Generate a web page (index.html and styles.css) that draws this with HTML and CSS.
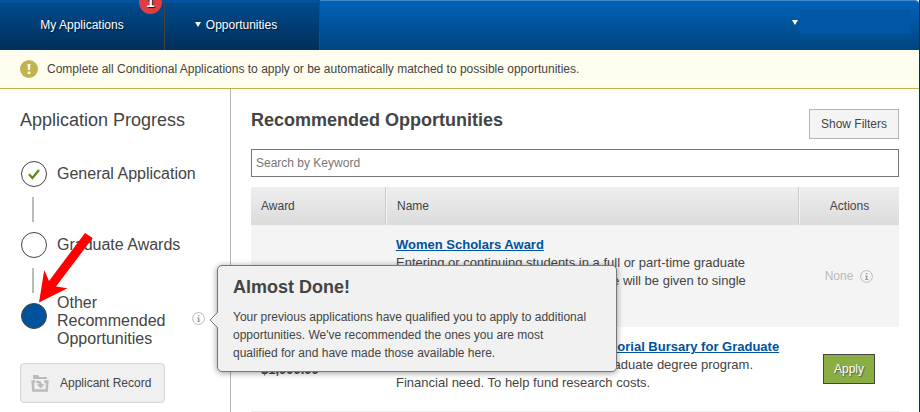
FILE: index.html
```html
<!DOCTYPE html>
<html lang="en">
    <head>
        <meta charset="UTF-8">
        <meta name="viewport" content="width=device-width, initial-scale=1.0">
        <title>Recommended Opportunities</title>
        <link rel="stylesheet" href="styles.css">
    </head>
    <body>
        <header class="topbar">
            <nav class="tabs">
                <a href="#" class="tab tab-applications">My Applications<span class="badge">1</span></a>
                <a href="#" class="tab tab-opportunities"><span class="caret"></span>Opportunities</a>
            </nav>
            <button class="user-menu" aria-label="Account">
                <span class="caret"></span>
                <span class="user-name"></span>
            </button>
        </header>
        <div class="notice">
            <svg width="18" height="18" viewBox="0 0 18 18">
                <circle cx="9" cy="9" r="9" fill="#c2b350"/>
                <path d="M7.5 4h3l-.5 6h-2z" fill="#fffdee"/>
                <circle cx="9" cy="12.7" r="1.5" fill="#fffdee"/>
            </svg>
            <p>Complete all Conditional Applications to apply or be automatically matched to possible opportunities.</p>
        </div>
        <div class="layout">
            <aside class="sidebar">
                <h2>Application Progress</h2>
                <div class="steps">
                    <div class="step">
                        <span class="dot">
                            <svg width="12" height="11" viewBox="0 0 12 11">
                                <path d="M1 5.2 4.4 9 11 1" fill="none" stroke="#5a8a1c" stroke-width="2.2"/>
                            </svg>
                        </span>
                        <a href="#" class="step-label">General Application</a>
                    </div>
                    <div class="connector"></div>
                    <div class="step">
                        <span class="dot"></span>
                        <a href="#" class="step-label">Graduate Awards</a>
                    </div>
                    <div class="connector"></div>
                    <div class="step step-current">
                        <span class="dot dot-current"></span>
                        <a href="#" class="step-label">Other Recommended Opportunities</a>
                        <span class="info">
                            <svg width="13" height="13" viewBox="0 0 13 13">
                                <circle cx="6.5" cy="6.5" r="5.9" fill="none" stroke="#bbb"/>
                                <path d="M6 3h1.4v1.3H6zM5 5.5h2.4v3.7h.9v.8H5v-.8h.9V6.3H5z" fill="#999"/>
                            </svg>
                            <div class="tooltip">
                                <svg class="tooltip-arrow" width="9" height="16" viewBox="0 0 9 16">
                                    <path d="M9 0 1 8l8 8" fill="#f1f1f1" stroke="#777"/>
                                </svg>
                                <h3>Almost Done!</h3>
                                <p>Your previous applications have qualified you to apply to additional opportunities. We've recommended the ones you are most qualified for and have made those available here.</p>
                            </div>
                        </span>
                    </div>
                    <svg class="pointer" width="55" height="70" viewBox="0 0 55 70">
                        <path d="M1 69.500 6.300 37l4.700 11L47 0l7.700 5L18 53.500l11.500 1.800z" fill="#f00"/>
                    </svg>
                </div>
                <button class="record">
                    <svg width="18" height="18" viewBox="0 0 18 18">
                        <path d="M2 1h5l1.500 2H16v2H2z" fill="#bbb"/>
                        <path d="M4.500 7.500H1.700L2.300 16.500h13.400l.6-9H13" fill="none" stroke="#bbb" stroke-width="2.500"/>
                        <path d="M5.500 8h1.500c1.800 0 2.700 1 2.700 3" fill="none" stroke="#bbb" stroke-width="2.500"/>
                        <path d="M5.700 10.200h8L9.700 14.600z" fill="#bbb"/>
                    </svg>
                    Applicant Record
                </button>
            </aside>
            <main class="content">
                <div class="content-head">
                    <h1>Recommended Opportunities</h1>
                    <button class="filters">Show Filters</button>
                </div>
                <input class="search" type="text" placeholder="Search by Keyword" aria-label="Search by Keyword">
                <table class="opportunities">
                    <thead>
                        <tr>
                            <th class="col-award">Award</th>
                            <th>Name</th>
                            <th class="col-actions">Actions</th>
                        </tr>
                    </thead>
                    <tbody>
                        <tr>
                            <td class="award"></td>
                            <td>
                                <a href="#">Women Scholars Award</a>
                                <p>Entering or continuing students in a full or part-time graduate<br>degree program each year. Preference will be given to single<br>parents.</p>
                            </td>
                            <td class="actions">
                                <span class="none">None
                                    <svg width="13" height="13" viewBox="0 0 13 13">
                                        <circle cx="6.5" cy="6.5" r="5.9" fill="none" stroke="#bbb"/>
                                        <path d="M6 3h1.4v1.3H6zM5 5.5h2.4v3.7h.9v.8H5v-.8h.9V6.3H5z" fill="#999"/>
                                    </svg>
                                </span>
                            </td>
                        </tr>
                        <tr>
                            <td class="award">$1,000.00</td>
                            <td>
                                <a href="#">University Alumni Scholarship Memorial Bursary for Graduate</a>
                                <p>Students who are fully enrolled in a graduate degree program.<br>Financial need. To help fund research costs.</p>
                            </td>
                            <td class="actions"><button class="apply">Apply</button></td>
                        </tr>
                    </tbody>
                </table>
            </main>
        </div>
    </body>
</html>
```
FILE: styles.css
```css
* {
    box-sizing: border-box;
}

body {
    margin: 0;
    font: 12px/18px "Liberation Sans", Arial, sans-serif;
    color: #444;
    background: #fff;
    border-right: 1px solid #003366;
}

h1, h2, h3, p {
    margin: 0;
}

button, input {
    font: inherit;
    color: inherit;
}

button {
    cursor: pointer;
}

/* top bar */
.topbar {
    display: flex;
    justify-content: space-between;
    height: 50px;
    background: linear-gradient(#0063b9, #004580);
    border-top: 1px solid #4088c8;
    border-top-right-radius: 4px;
}

.tabs {
    display: flex;
    margin-top: -1px;
    overflow: hidden;
}

.tab {
    position: relative;
    display: flex;
    align-items: center;
    justify-content: center;
    padding-bottom: 4px;
    color: #fff;
    text-decoration: none;
    text-shadow: 1px 1px 1px #001a33;
    background: linear-gradient(#004b8d, #002f5a);
    border-top: 3px solid #00529c;
    border-right: 1px solid #444;
}

.tab-applications {
    width: 165px;
}

.tab-opportunities {
    width: 155px;
    padding-right: 12px;
    gap: 5px;
}

.caret {
    border: 3px solid transparent;
    border-top: 5px solid #fff;
    border-bottom: 0;
}

.badge {
    position: absolute;
    top: -13px;
    right: 2px;
    width: 23px;
    height: 24px;
    border-radius: 50%;
    background: #df3e43;
    font-size: 15px;
    font-weight: bold;
    line-height: 24px;
    text-align: center;
}

.user-menu {
    display: flex;
    align-items: center;
    gap: 2px;
    height: 24px;
    margin: 9px 8px 0 0;
    padding: 0;
    border: 0;
    background: none;
}

.user-name {
    width: 111px;
    height: 24px;
    background: #0057a6;
}

/* notice */
.notice {
    display: flex;
    align-items: center;
    gap: 9px;
    height: 39px;
    padding: 0 20px;
    background: #fffdee;
    border-bottom: 1px solid #c2b350;
}

.layout {
    display: flex;
}

/* progress */
.sidebar {
    flex: none;
    width: 231px;
    padding: 20px 20px 8px;
    border-right: 1px solid #b5b5b5;
}

.sidebar h2 {
    font-size: 18px;
    font-weight: normal;
    line-height: 22px;
    margin-bottom: 30px;
}

.steps {
    position: relative;
}

.step {
    display: flex;
    align-items: center;
    gap: 10px;
    padding-left: 1px;
}

.dot {
    flex: none;
    display: flex;
    align-items: center;
    justify-content: center;
    width: 26px;
    height: 26px;
    border: 1px solid #444;
    border-radius: 50%;
}

.dot-current {
    background: #00529c;
    margin-top: 9px;
}

.step-label {
    font-size: 16px;
    color: inherit;
    text-decoration: none;
}

.connector {
    width: 2px;
    height: 25px;
    margin: 10px 0 10px 12px;
    background: #bbb;
}

.step-current {
    align-items: flex-start;
    margin-top: -9px;
}

.step-current .step-label {
    width: 125px;
}

.info {
    position: relative;
    height: 13px;
    margin-top: 18px;
    line-height: 0;
}

.tooltip {
    position: absolute;
    z-index: 2;
    top: -47px;
    left: 25px;
    width: 400px;
    padding: 10px 25px 9px 15px;
    line-height: 18px;
    background: #f1f1f1;
    border: 1px solid #777;
    border-radius: 5px;
    box-shadow: 0 1px 6px rgba(0, 0, 0, .4);
}

.tooltip h3 {
    font-size: 18px;
    line-height: 22px;
    margin-bottom: 10px;
}

.tooltip-arrow {
    position: absolute;
    top: 46px;
    left: -9px;
}

.pointer {
    position: absolute;
    z-index: 1;
    top: 72px;
    left: 18px;
}

.record {
    display: flex;
    align-items: center;
    gap: 11px;
    width: 145px;
    height: 40px;
    margin-top: 15px;
    padding: 0 10px;
    background: #f0f0f0;
    border: 1px solid #d5d5d5;
    border-radius: 4px;
    white-space: nowrap;
}

/* opportunities */
.content {
    flex: 1;
    padding: 20px 20px 0;
}

.content-head {
    display: flex;
    justify-content: space-between;
    margin-bottom: 10px;
}

h1 {
    font-size: 18px;
    line-height: 22px;
}

.filters {
    height: 30px;
    padding: 0 11px;
    background: #f4f4f4;
    border: 1px solid #b5b5b5;
}

.search {
    display: block;
    width: 100%;
    height: 28px;
    margin-bottom: 10px;
    padding: 0 4px;
    border: 1px solid #777;
}

.search::placeholder {
    color: #777;
}

.opportunities {
    width: 100%;
    border-collapse: separate;
    border-spacing: 0;
    table-layout: fixed;
}

.opportunities th {
    height: 38px;
    padding: 0 10px;
    font-weight: normal;
    text-align: left;
    background: linear-gradient(#eee, #dbdbdb);
}

.opportunities th + th {
    border-left: 1px solid #f4f4f4;
    box-shadow: -1px 0 #ccc;
}

.col-award {
    width: 135px;
}

.opportunities .col-actions {
    width: 100px;
    text-align: center;
}

.opportunities td {
    padding: 11px 10px 19px;
    font-size: 13px;
}

.opportunities tbody tr {
    background: #f4f4f4;
}

.opportunities tbody tr:nth-child(even) {
    background: #fff;
}

.opportunities tbody tr:last-child td {
    border-bottom: 1px solid #eee;
}

.opportunities td a {
    font-weight: bold;
    color: #00529c;
}

.opportunities .award {
    padding: 12px 10px 10px;
    font-weight: bold;
}

.opportunities .actions {
    padding: 10px;
    font-size: 12px;
    text-align: center;
}

.none {
    display: flex;
    align-items: center;
    justify-content: center;
    gap: 7px;
    color: #bbb;
}

.apply {
    height: 30px;
    padding: 0 10px;
    color: #fff;
    text-shadow: 1px 1px 1px #555;
    background: #8aae42;
    border: 1px solid #444;
}
```
